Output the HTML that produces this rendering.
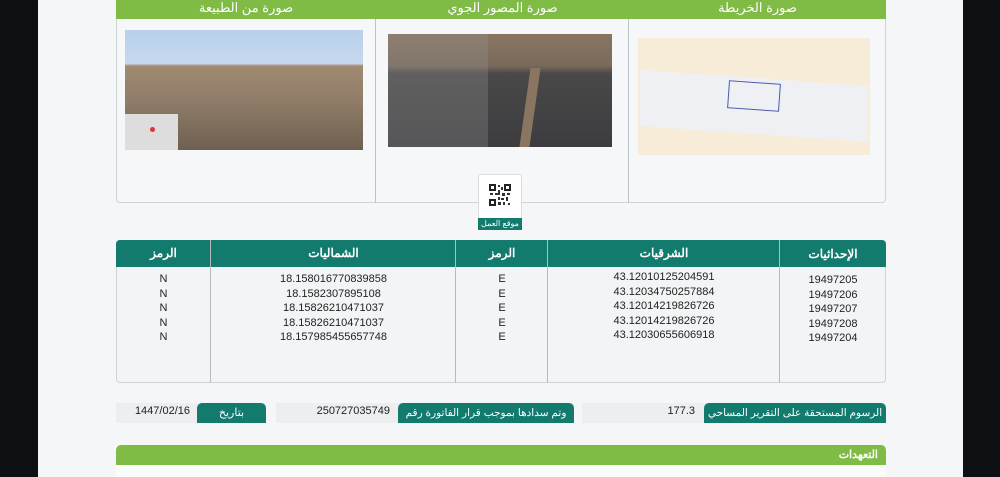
<!DOCTYPE html>
<html><head><meta charset="utf-8"><style>
*{margin:0;padding:0;box-sizing:border-box}
body{width:1000px;height:477px;overflow:hidden;background:#0e0f13;font-family:"Liberation Sans","Noto Sans CJK SC",sans-serif;position:relative}
.page{position:absolute;left:38px;top:0;width:925px;height:477px;background:#f5f6f7}
.a{position:absolute}
.hd{color:#fff;font-size:12px;text-align:center;line-height:19px;white-space:nowrap}
.t{font-size:11px;color:#222;text-align:center;line-height:14.5px}
.lb{font-size:10.5px!important;letter-spacing:-0.2px}
</style></head><body>
<div class="page"></div>
<div class="a" style="left:116px;top:-4px;width:770px;height:207px;border:1px solid #cfd3d6;border-radius:4px;background:#f6f7f8"></div>
<div class="a" style="left:116px;top:0;width:770px;height:19px;background:#7fbb45"></div>
<div class="a hd" style="left:116px;top:-2px;width:260px;font-size:13px">صورة من الطبيعة</div>
<div class="a hd" style="left:376px;top:-2px;width:253px;font-size:13px">صورة المصور الجوي</div>
<div class="a hd" style="left:629px;top:-2px;width:257px;font-size:13px">صورة الخريطة</div>
<div class="a" style="left:375px;top:19px;width:1px;height:184px;background:#b9c4cc"></div>
<div class="a" style="left:628px;top:19px;width:1px;height:184px;background:#b9c4cc"></div>
<div class="a" style="left:125px;top:30px;width:238px;height:120px;background:linear-gradient(#b8d0ec 0,#c6d8ee 28%,#a08a72 30%,#8f7c68 60%,#6e6050 100%)"></div>
<div class="a" style="left:125px;top:114px;width:53px;height:36px;background:#ddd"></div>
<div class="a" style="left:150px;top:127px;width:5px;height:5px;background:#d33;border-radius:50%"></div>
<div class="a" style="left:388px;top:34px;width:224px;height:113px;background:linear-gradient(#8a7561 0,#7a6a5c 28%,#4a4848 35%,#3c3c40 100%)"></div>
<div class="a" style="left:388px;top:34px;width:100px;height:113px;background:rgba(150,150,150,.3)"></div>
<div class="a" style="left:525px;top:68px;width:10px;height:79px;background:#8a7660;transform:skewX(-8deg)"></div>
<div class="a" style="left:638px;top:38px;width:232px;height:117px;background:#f7ecd8"></div>
<div class="a" style="left:640px;top:78px;width:228px;height:56px;background:#eef0f4;transform:skewY(4deg)"></div>
<div class="a" style="left:728px;top:82px;width:52px;height:28px;border:1px solid #4a5aa8;transform:rotate(4deg)"></div>
<div class="a" style="left:478px;top:174px;width:44px;height:56px;background:#fff;border-radius:3px;border:1px solid #ddd"></div>
<svg class="a" style="left:489px;top:184px" width="22" height="22" viewBox="0 0 22 22"><rect x="0" y="0" width="7" height="7" fill="#222"/><rect x="15" y="0" width="7" height="7" fill="#222"/><rect x="0" y="15" width="7" height="7" fill="#222"/><rect x="2" y="2" width="3" height="3" fill="#fff"/><rect x="17" y="2" width="3" height="3" fill="#fff"/><rect x="2" y="17" width="3" height="3" fill="#fff"/><path d="M9 1h2v2H9zM12 3h2v3h-2zM9 6h2v3H9zM1 9h3v2H1zM6 9h5v2H6zM13 9h3v3h-3zM18 9h3v2h-3zM9 13h2v3H9zM12 14h3v2h-3zM17 13h2v4h-2zM9 18h3v3H9zM14 18h2v3h-2zM19 19h2v2h-2z" fill="#333"/></svg>
<div class="a" style="left:478px;top:218px;width:44px;height:12px;background:#137a6e;color:#fff;font-size:8px;text-align:center;line-height:12px">موقع العمل</div>
<div class="a" style="left:116px;top:240px;width:770px;height:143px;border:1px solid #cfd3d6;border-radius:4px;background:#f3f4f5"></div>
<div class="a" style="left:116px;top:240px;width:770px;height:27px;background:#137a6e;border-radius:4px 4px 0 0"></div>
<div class="a" style="left:210px;top:240px;width:1px;height:143px;background:#b5bcc0"></div>
<div class="a" style="left:455px;top:240px;width:1px;height:143px;background:#b5bcc0"></div>
<div class="a" style="left:547px;top:240px;width:1px;height:143px;background:#b5bcc0"></div>
<div class="a" style="left:779px;top:240px;width:1px;height:143px;background:#b5bcc0"></div>
<div class="a hd" style="left:116px;top:244px;width:95px;font-weight:bold">الرمز</div>
<div class="a hd" style="left:211px;top:244px;width:245px;font-weight:bold">الشماليات</div>
<div class="a hd" style="left:456px;top:244px;width:92px;font-weight:bold">الرمز</div>
<div class="a hd" style="left:548px;top:244px;width:232px;font-weight:bold">الشرقيات</div>
<div class="a hd" style="left:780px;top:245px;width:106px;font-weight:bold">الإحداثيات</div>
<div class="a t" style="left:116px;top:272px;width:95px">N<br>N<br>N<br>N<br>N</div>
<div class="a t" style="left:211px;top:272px;width:245px">18.158016770839858<br>18.1582307895108<br>18.15826210471037<br>18.15826210471037<br>18.157985455657748</div>
<div class="a t" style="left:456px;top:272px;width:92px">E<br>E<br>E<br>E<br>E</div>
<div class="a t" style="left:548px;top:270px;width:232px">43.12010125204591<br>43.12034750257884<br>43.12014219826726<br>43.12014219826726<br>43.12030655606918</div>
<div class="a t" style="left:780px;top:273px;width:106px">19497205<br>19497206<br>19497207<br>19497208<br>19497204</div>
<div class="a" style="left:582px;top:403px;width:304px;height:20px;background:#eceeef"></div>
<div class="a hd lb" style="left:704px;top:403px;width:182px;height:20px;background:#137a6e;border-radius:5px 5px 0 0;line-height:20px">الرسوم المستحقة على التقرير المساحي</div>
<div class="a t" style="left:640px;top:404px;width:55px;text-align:right">177.3</div>
<div class="a" style="left:276px;top:403px;width:298px;height:20px;background:#eceeef"></div>
<div class="a hd lb" style="left:398px;top:403px;width:176px;height:20px;background:#137a6e;border-radius:5px 5px 0 0;line-height:20px">وتم سدادها بموجب قرار الفاتورة رقم</div>
<div class="a t" style="left:290px;top:404px;width:100px;text-align:right">250727035749</div>
<div class="a" style="left:116px;top:403px;width:150px;height:20px;background:#eceeef"></div>
<div class="a hd" style="left:197px;top:403px;width:69px;height:20px;background:#137a6e;border-radius:5px 5px 0 0;font-size:11px;line-height:20px">بتاريخ</div>
<div class="a t" style="left:120px;top:404px;width:70px;text-align:right">1447/02/16</div>
<div class="a" style="left:116px;top:445px;width:770px;height:20px;background:#7fbb45;border-radius:5px 5px 0 0"></div>
<div class="a hd" style="left:780px;top:446px;width:98px;text-align:right;font-size:11px;font-weight:bold">التعهدات</div>
<div class="a" style="left:116px;top:465px;width:770px;height:12px;background:#fafbfb"></div>
</body></html>
